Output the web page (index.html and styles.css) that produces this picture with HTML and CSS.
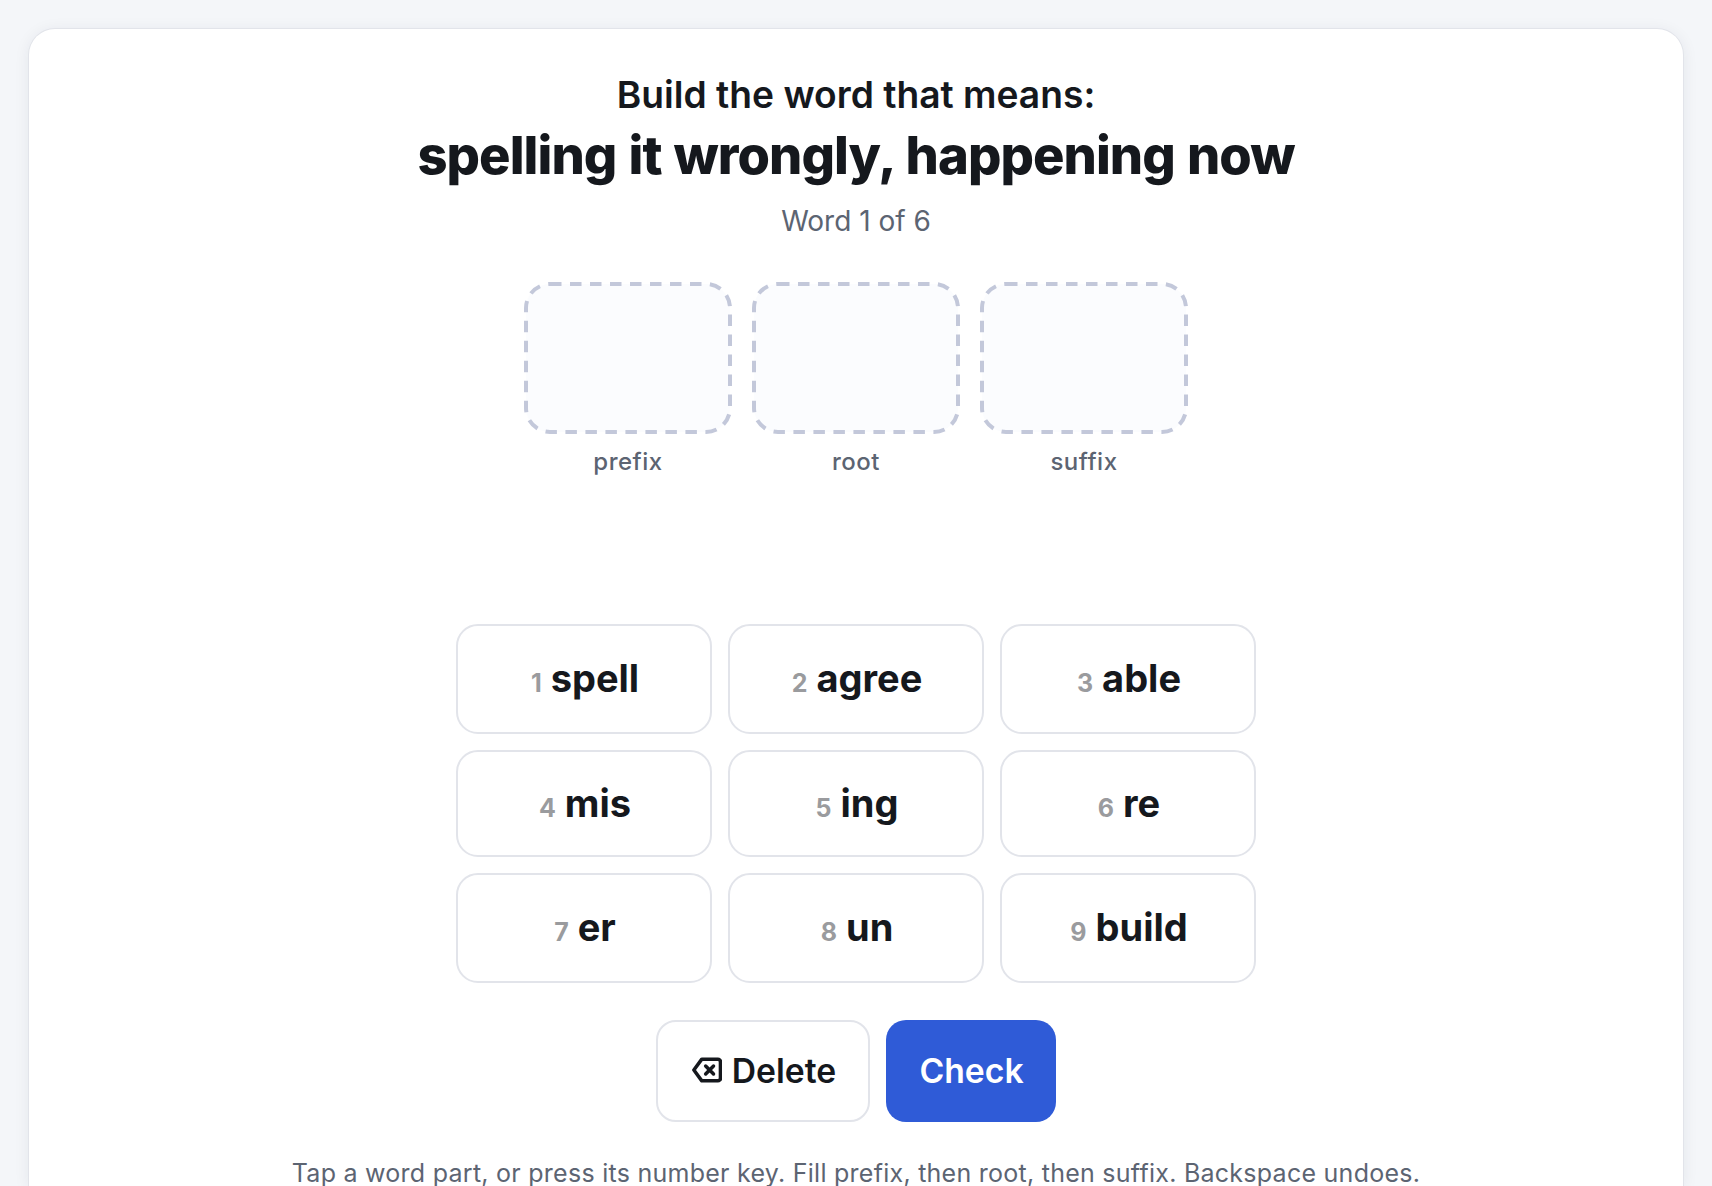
FILE: index.html
```html
<!DOCTYPE html>
<html lang="en">
<head>
<meta charset="utf-8">
<title>Word builder</title>
<link rel="stylesheet" href="styles.css">
</head>
<body>
<main class="card">
  <p class="lead">Build the word that means:</p>
  <h1 class="clue">spelling it wrongly, happening now</h1>
  <p class="progress">Word 1 of 6</p>
  <section class="slots">
    <div class="slot"><svg class="slot-box" viewBox="0 0 208 152" aria-hidden="true"><rect class="slot-rect" x="2" y="2" width="204" height="148" rx="24"/></svg><span class="slot-label">prefix</span></div>
    <div class="slot"><svg class="slot-box" viewBox="0 0 208 152" aria-hidden="true"><rect class="slot-rect" x="2" y="2" width="204" height="148" rx="24"/></svg><span class="slot-label">root</span></div>
    <div class="slot"><svg class="slot-box" viewBox="0 0 208 152" aria-hidden="true"><rect class="slot-rect" x="2" y="2" width="204" height="148" rx="24"/></svg><span class="slot-label">suffix</span></div>
  </section>
  <section class="keys">
    <button class="key"><span class="num">1</span>spell</button>
    <button class="key"><span class="num">2</span>agree</button>
    <button class="key"><span class="num">3</span>able</button>
    <button class="key"><span class="num">4</span>mis</button>
    <button class="key"><span class="num">5</span>ing</button>
    <button class="key"><span class="num">6</span>re</button>
    <button class="key"><span class="num">7</span>er</button>
    <button class="key"><span class="num">8</span>un</button>
    <button class="key"><span class="num">9</span>build</button>
  </section>
  <section class="actions">
    <button class="btn btn-delete">
      <svg class="icon" viewBox="0 0 29 25" fill="none" stroke="currentColor" stroke-width="3.4" stroke-linejoin="round" stroke-linecap="round" aria-hidden="true">
        <path d="M9.5 2H25a2.5 2.5 0 0 1 2.5 2.5v16a2.5 2.5 0 0 1-2.5 2.5H9.5L1.8 12.5z"/>
        <path d="M13.2 8.7l7.6 7.6M20.8 8.7l-7.6 7.6"/>
      </svg>
      Delete
    </button>
    <button class="btn btn-check">Check</button>
  </section>
  <p class="hint">Tap a word part, or press its number key. Fill prefix, then root, then suffix. Backspace undoes.</p>
</main>
</body>
</html>
```
FILE: styles.css
```css
html, body {
  margin: 0;
  height: 100%;
  overflow: hidden;
  background: #f4f6f9;
}
body {
  font-family: Inter, "Noto Sans", sans-serif;
  color: #15181d;
  padding: 29px 29px 0 29px;
  box-sizing: border-box;
}
p, h1 { margin: 0; }
.card {
  background: #fff;
  border-radius: 26px 26px 0 0;
  box-shadow: 0 0 0 1px #e2e4ea, 0 2px 16px rgba(30, 40, 70, 0.08);
  height: 1157px;
  display: flex;
  flex-direction: column;
  align-items: center;
  padding-top: 44px;
  box-sizing: border-box;
}
.lead {
  font-size: 37.2px;
  font-weight: 600;
  line-height: 44px;
}
.clue {
  font-size: 52.5px;
  font-weight: 850;
  line-height: 62px;
  letter-spacing: -0.95px;
  word-spacing: 1.5px;
  margin-top: 7px;
}
.progress {
  font-size: 28px;
  line-height: 36px;
  color: #5c6472;
  margin-top: 17px;
}
.slots {
  display: flex;
  gap: 20px;
  margin-top: 43px;
}
.slot {
  display: flex;
  flex-direction: column;
  align-items: center;
  width: 208px;
}
.slot-box {
  width: 208px;
  height: 152px;
  display: block;
}
.slot-rect {
  fill: #fbfcfe;
  stroke: #c3c8da;
  stroke-width: 4;
  stroke-dasharray: 11.5 8.5;
}
.slot-label {
  font-size: 24px;
  font-weight: 500;
  line-height: 30px;
  letter-spacing: 0.5px;
  color: #5c6472;
  margin-top: 13px;
}
.keys {
  display: grid;
  grid-template-columns: repeat(3, 256px);
  grid-template-rows: 110px 107px 110px;
  gap: 16px;
  margin-top: 147px;
}
.key, .btn {
  font-family: inherit;
  cursor: pointer;
}
.key {
  background: #fff;
  border: 2px solid #e2e4ea;
  border-radius: 22px;
  color: #15181d;
  font-size: 38px;
  font-weight: 750;
  padding: 0 0 2px 2px;
}
.num {
  font-size: 25px;
  font-weight: 700;
  color: #9a9b9e;
  margin-right: 9px;
}
.actions {
  display: flex;
  gap: 16px;
  margin-top: 37px;
}
.btn {
  height: 102px;
  border-radius: 20px;
  font-size: 33.7px;
  font-weight: 600;
  padding: 0 0 2px;
  display: flex;
  align-items: center;
  justify-content: center;
}
.btn-delete {
  width: 214px;
  gap: 10px;
  background: #fff;
  border: 2px solid #e2e4ea;
  color: #15181d;
  padding-left: 2px;
}
.btn-check {
  width: 170px;
  background: #2f5bd7;
  border: 0;
  color: #fff;
  padding-left: 1px;
}
.icon {
  width: 30px;
  height: 26px;
}
.hint {
  font-size: 25px;
  line-height: 26px;
  color: #5c6472;
  margin-top: 38px;
  letter-spacing: 0.26px;
}
```
